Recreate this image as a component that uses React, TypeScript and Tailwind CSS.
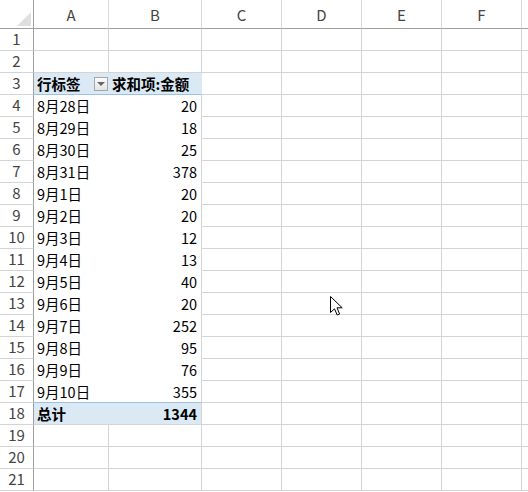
import React from "react";

const COLS = ["A", "B", "C", "D", "E", "F", ""];

const DATA: [string, string][] = [
    ["8月28日", "20"],
    ["8月29日", "18"],
    ["8月30日", "25"],
    ["8月31日", "378"],
    ["9月1日", "20"],
    ["9月2日", "20"],
    ["9月3日", "12"],
    ["9月4日", "13"],
    ["9月5日", "40"],
    ["9月6日", "20"],
    ["9月7日", "252"],
    ["9月8日", "95"],
    ["9月9日", "76"],
    ["9月10日", "355"],
];

const FONT = "font-['Noto_Sans_CJK_SC','Noto_Sans',sans-serif]";
const GRID = "grid grid-cols-[34px_75px_93px_80px_80px_80px_80px_1fr]";

function RowHead({n}: {n: number}) {
    return (
        <div className="h-[22px] border-r border-b border-r-[#9f9f9f] border-b-[#d4d4d4] flex items-center justify-center text-[15px] text-[#444]">
            {n}
        </div>
    );
}

function Blank() {
    return <div className="h-[22px] border-r border-b border-[#d4d4d4]"/>;
}

function Tail() {
    return (
        <>
            <Blank/><Blank/><Blank/><Blank/>
            <div className="h-[22px] border-b border-[#d4d4d4]"/>
        </>
    );
}

function FilterButton() {
    return (
        <div className="w-[14px] h-[14px] border border-[#a6a6a6] bg-gradient-to-b from-[#fbfbfb] to-[#e4e4e4] flex items-center justify-center">
            <div className="w-0 h-0 border-l-[4px] border-r-[4px] border-t-[4px] border-l-transparent border-r-transparent border-t-[#666]"/>
        </div>
    );
}

function Cursor() {
    return (
        <svg className="absolute left-[330px] top-[296px]" width="14" height="21" viewBox="0 0 14 21">
            <path d="M0.5 0.5 L0.5 16.5 L4.5 12.8 L7.2 19 L9.6 18 L7 11.8 L12.2 11.8 Z"
                  fill="#fff" stroke="#000" strokeWidth="1" strokeLinejoin="miter"/>
        </svg>
    );
}

export default function App() {
    return (
        <div className={`relative w-[528px] h-[492px] overflow-hidden bg-white text-black ${FONT}`}>
            {/* column headers */}
            <div className={GRID}>
                <div className="h-[29px] border-r border-b border-[#9f9f9f] relative">
                    <svg className="absolute right-[2px] bottom-[2px]" width="14" height="14" viewBox="0 0 14 14">
                        <path d="M14 0 L14 14 L0 14 Z" fill="#dfdfdf"/>
                    </svg>
                </div>
                {COLS.map((c, i) => (
                    <div key={i}
                         className={`h-[29px] border-b border-b-[#9f9f9f] ${c ? "border-r border-r-[#d9d9d9]" : ""} flex items-end justify-center pb-[2px] text-[15px] text-[#444]`}>
                        {c}
                    </div>
                ))}
            </div>

            {/* rows 1, 2 */}
            {[1, 2].map(n => (
                <div key={n} className={GRID}>
                    <RowHead n={n}/>
                    <Blank/><Blank/>
                    <Tail/>
                </div>
            ))}

            {/* row 3: pivot header */}
            <div className={GRID}>
                <RowHead n={3}/>
                <div className="h-[22px] bg-[#dbe9f5] border-b border-b-[#9bc2e6] flex items-center justify-between pl-[3px] pr-[1px] text-[14.5px] font-bold">
                    <span>行标签</span>
                    <FilterButton/>
                </div>
                <div className="h-[22px] bg-[#dbe9f5] border-b border-b-[#9bc2e6] border-r border-r-[#dbe9f5] flex items-center pl-[3px] text-[14.5px] font-bold whitespace-nowrap">
                    求和项:金额
                </div>
                <Tail/>
            </div>

            {/* data rows */}
            {DATA.map(([d, v], i) => {
                const last = i === DATA.length - 1;
                return (
                    <div key={d} className={GRID}>
                        <RowHead n={i + 4}/>
                        <div className={`h-[22px] border-b ${last ? "border-b-[#9bc2e6]" : "border-b-white"} flex items-center pl-[3px] text-[14.5px]`}>
                            {d}
                        </div>
                        <div className={`h-[22px] border-b ${last ? "border-b-[#9bc2e6]" : "border-b-white"} border-r border-r-[#d4d4d4] flex items-center justify-end pr-[4px] text-[14.5px]`}>
                            {v}
                        </div>
                        <Tail/>
                    </div>
                );
            })}

            {/* row 18: total */}
            <div className={GRID}>
                <RowHead n={18}/>
                <div className="h-[22px] bg-[#dbe9f5] border-b border-b-[#d4d4d4] flex items-center pl-[3px] text-[14.5px] font-bold">
                    总计
                </div>
                <div className="h-[22px] bg-[#dbe9f5] border-b border-b-[#d4d4d4] border-r border-r-[#d4d4d4] flex items-center justify-end pr-[4px] text-[14.5px] font-bold">
                    1344
                </div>
                <Tail/>
            </div>

            {/* rows 19-21 */}
            {[19, 20, 21].map(n => (
                <div key={n} className={GRID}>
                    <RowHead n={n}/>
                    <Blank/><Blank/>
                    <Tail/>
                </div>
            ))}

            <Cursor/>
        </div>
    );
}
